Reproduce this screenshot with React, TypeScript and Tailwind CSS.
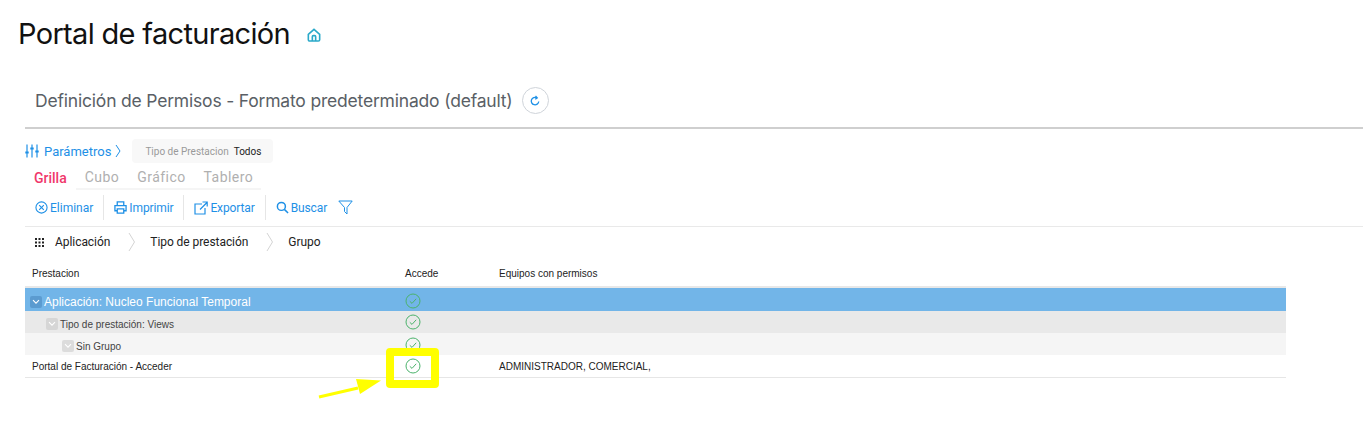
import React from "react";

const sans = "font-['Liberation_Sans',Arial,sans-serif]";
const blue = "text-[#1e90e6]";

function Check() {
  return (
    <svg width="16" height="16" viewBox="0 0 16 16" fill="none" className="block">
      <circle cx="8" cy="8" r="7" stroke="#4cb36c" strokeWidth="1" />
      <path d="M4.8 8.3 L7 10.4 L11.2 5.8" stroke="#4cb36c" strokeWidth="1" />
    </svg>
  );
}

function Chevron({ tone }: { tone: string }) {
  return (
    <span className={`flex h-3 w-3 items-center justify-center rounded-[2px] ${tone}`}>
      <svg width="8" height="6" viewBox="0 0 8 6" fill="none">
        <path d="M1 1.2 L4 4.2 L7 1.2" stroke="#fff" strokeWidth="1.1" />
      </svg>
    </span>
  );
}

function Divider() {
  return <span className="mx-[10px] h-[25px] w-px bg-[#e6e6e6]" />;
}

function Crumb() {
  return (
    <svg width="8" height="20" viewBox="0 0 8 20" fill="none" className="ml-[18px] mr-[14px]">
      <path d="M1 1 L6.5 10 L1 19" stroke="#d4d4d4" strokeWidth="1" />
    </svg>
  );
}

function Row({
  bg,
  text,
  indent,
  chevron,
  textClass,
  h,
  border,
  equipos,
  textPad,
  checkPad,
}: {
  bg: string;
  text: string;
  indent: string;
  chevron?: string;
  textClass: string;
  h: string;
  border?: boolean;
  equipos?: string;
  textPad?: string;
  checkPad?: string;
}) {
  return (
    <div className={`flex items-center overflow-hidden ${h} ${bg} ${border ? "border-b border-[#e6e6e6]" : ""}`}>
      <div className={`flex w-[372px] items-center gap-[2px] ${indent} ${textClass} ${textPad ?? ""}`}>
        {chevron && <Chevron tone={chevron} />}
        <span>{text}</span>
      </div>
      <div className={`flex w-[102px] pl-[8px] ${checkPad ?? ""}`}>
        <Check />
      </div>
      <div className="text-[10px] text-[#222]">{equipos}</div>
    </div>
  );
}

export default function App() {
  return (
    <div className={`relative h-[421px] w-[1363px] overflow-hidden bg-white ${sans}`}>
      <div className="flex h-[68px] items-center pl-[18px] pb-[1px]">
        <h1 className="font-['Inter',sans-serif] text-[29px] font-normal leading-none tracking-[-0.67px] text-[#111]">
          Portal de facturación
        </h1>
        <svg width="16" height="16" viewBox="0 0 24 24" fill="none" stroke="#2aa9c9" strokeWidth="2.4" className="ml-[16px] mt-[3px]">
          <path d="M3.5 11 L12 3.5 L20.5 11 V19 a2 2 0 0 1 -2 2 H5.5 a2 2 0 0 1 -2 -2 Z" />
          <path d="M9.5 21 V14.5 a1.5 1.5 0 0 1 1.5 -1.5 h2 a1.5 1.5 0 0 1 1.5 1.5 V21" />
        </svg>
      </div>

      <div className="ml-[25px]">
        <div className="flex h-[61px] items-center border-b-2 border-[#cfcfcf] pl-[10px] pt-[6px]">
          <h2 className="mt-[2px] font-['Inter',sans-serif] text-[17.5px] font-normal tracking-[-0.19px] text-[#5a5f66]">
            Definición de Permisos - Formato predeterminado (default)
          </h2>
          <span className="ml-[9px] flex h-[27px] w-[27px] items-center justify-center rounded-full border border-[#cfd4da]">
            <svg width="12" height="12" viewBox="0 0 24 24" fill="none" stroke="#1e90e6" strokeWidth="2.6">
              <path d="M19.5 13 a7.5 7.5 0 1 1 -4 -7.5" />
              <path d="M13 2 L16.5 5.6 L12.5 8.5" />
            </svg>
          </span>
        </div>

        <div className="mt-[10px] flex h-[24px] items-center">
          <svg width="14" height="14" viewBox="0 0 14 14" fill="none" stroke="#1e90e6" strokeWidth="1.2">
            <path d="M2 0.5 V13.5 M7 0.5 V13.5 M12 0.5 V13.5" />
            <path d="M0.3 8.5 H3.7 M5.3 4.5 H8.7 M10.3 7.5 H13.7" strokeWidth="2" />
          </svg>
          <span className={`ml-[5px] pt-[1px] font-['Roboto',sans-serif] text-[13px] ${blue}`}>Parámetros</span>
          <svg width="6" height="14" viewBox="0 0 6 14" fill="none" stroke="#1e90e6" strokeWidth="1" className="ml-[4px]">
            <path d="M1 1 L5 7 L1 13" />
          </svg>
          <div className="ml-[11px] flex h-[24px] items-center rounded-[4px] bg-[#f8f8f8] pl-[13px] pr-[12px] pt-[1px] text-[10px]">
            <span className="font-['Roboto',sans-serif] text-[#9a9a9a]">Tipo de Prestacion</span>
            <span className="ml-[5px] font-['Roboto',sans-serif] text-[#222]">Todos</span>
          </div>
        </div>

        <div className="mt-[1px] flex h-[26px] items-center pl-[9px] pt-[2px] font-['Roboto',sans-serif] text-[14px]">
          <span className="font-medium text-[#f0386b]">Grilla</span>
          <div className="ml-[9px] flex h-[24px] items-center gap-[18px] border-b-2 border-[#f5f5f5] pl-[9px] pr-[8px] tracking-[0.45px] text-[#b0b0b0]">
            <span>Cubo</span>
            <span>Gráfico</span>
            <span>Tablero</span>
          </div>
        </div>

        <div className={`flex h-[37px] items-center border-b border-[#e9e9e9] pb-[1px] pl-[10px] text-[12px] tracking-[-0.12px] font-['Roboto',sans-serif] ${blue}`}>
          <svg width="13" height="13" viewBox="0 0 14 14" fill="none" stroke="#1e90e6" strokeWidth="1.2">
            <circle cx="7" cy="7" r="6" />
            <path d="M4.5 4.5 L9.5 9.5 M9.5 4.5 L4.5 9.5" />
          </svg>
          <span className="ml-[2px] tracking-[0px]">Eliminar</span>
          <Divider />
          <svg width="13" height="13" viewBox="0 0 14 14" fill="none" stroke="#1e90e6" strokeWidth="1.4">
            <path d="M3.5 4.5 V1 H10.5 V4.5 M3.5 10.5 H1 V5 H13 V10.5 H10.5 M3.5 8.5 H10.5 V13 H3.5 Z" />
          </svg>
          <span className="ml-[2px]">Imprimir</span>
          <Divider />
          <svg width="14" height="14" viewBox="0 0 14 14" fill="none" stroke="#1e90e6" strokeWidth="1.2">
            <path d="M8 3 H1 V13 H11 V7 M6 8.5 L13 1.5 M8.5 1 H13.2 V5.5" />
          </svg>
          <span className="ml-[2px]">Exportar</span>
          <Divider />
          <svg width="13" height="13" viewBox="0 0 14 14" fill="none" stroke="#1e90e6" strokeWidth="1.6">
            <circle cx="5.8" cy="5.8" r="4.3" />
            <path d="M9 9 L13 13" />
          </svg>
          <span className="ml-[2px]">Buscar</span>
          <svg width="15" height="15" viewBox="0 0 15 15" fill="none" stroke="#1e90e6" strokeWidth="1" className="ml-[11px]">
            <path d="M0.8 1 H14.2 L9 7.5 V14 L6.5 11.5 V7.5 Z" />
          </svg>
        </div>

        <div className="flex h-[30px] items-center pl-[10px] font-['Roboto',sans-serif] text-[12px] tracking-[-0.06px] text-[#222]">
          <svg width="9" height="9" viewBox="0 0 9 9" fill="#222">
            <path d="M0 0h2v2H0zM3.5 0h2v2h-2zM7 0h2v2H7zM0 3.5h2v2H0zM3.5 3.5h2v2h-2zM7 3.5h2v2H7zM0 7h2v2H0zM3.5 7h2v2h-2zM7 7h2v2H7z" />
          </svg>
          <span className="ml-[11px]">Aplicación</span>
          <Crumb />
          <span>Tipo de prestación</span>
          <Crumb />
          <span>Grupo</span>
        </div>

        <div className="w-[1261px]">
          <div className="mt-[1px] flex h-[30px] items-center border-b-2 border-[#e8e8e8] pt-[3px] text-[10px] text-[#222]">
            <div className="w-[380px] pl-[7px]">Prestacion</div>
            <div className="w-[94px]">Accede</div>
            <div>Equipos con permisos</div>
          </div>
          <Row bg="bg-[#72b5e8]" h="h-[23px]" indent="pl-[5px]" chevron="bg-[#5b9bd0]" textClass="text-[12px] text-white" text="Aplicación: Nucleo Funcional Temporal" textPad="pt-[4px]" checkPad="pt-[2px]" />
          <Row bg="bg-[#e9e9e9]" h="h-[22px]" indent="pl-[21px]" chevron="bg-[#d6d6d6]" textClass="text-[10px] text-[#444]" text="Tipo de prestación: Views" textPad="pt-[4px]" />
          <Row bg="bg-[#f5f5f5]" h="h-[22px]" indent="pl-[37px]" chevron="bg-[#dcdcdc]" textClass="text-[10px] text-[#444]" text="Sin Grupo" textPad="pt-[4px]" checkPad="pt-[2px]" />
          <Row bg="bg-white" h="h-[23px]" indent="pl-[7px]" textClass="text-[10px] text-[#222]" text="Portal de Facturación - Acceder" border equipos="ADMINISTRADOR, COMERCIAL," />
        </div>
      </div>

      <div className="absolute left-[386px] top-[348px] h-[40px] w-[53px] rounded-[4px] border-[8px] border-[#ffff00]" />
      <svg width="70" height="30" viewBox="0 0 70 30" className="absolute left-[316px] top-[377px]">
        <path d="M3 20 L42 11" stroke="#ffff00" strokeWidth="3" />
        <path d="M40 2 L65 3.5 L44 17 Z" fill="#ffff00" />
      </svg>
    </div>
  );
}
